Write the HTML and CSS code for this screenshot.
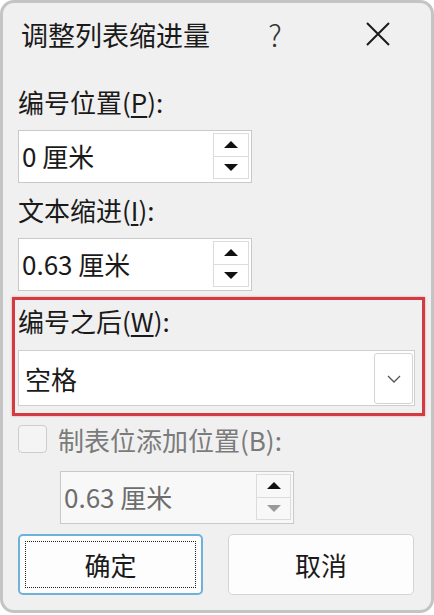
FILE: index.html
```html
<!DOCTYPE html>
<html lang="zh-CN">
<head>
    <meta charset="UTF-8">
    <meta name="viewport" content="width=device-width, initial-scale=1.0">
    <title>调整列表缩进量</title>
    <link rel="stylesheet" href="styles.css">
</head>
<body>

<div class="dialog">
    <div class="titlebar">
        <span class="title">调整列表缩进量</span>
        <span class="help">?</span>
        <span class="close">
            <svg width="24" height="24" viewBox="0 0 24 24"><path d="M1 1 L23 23 M23 1 L1 23" stroke="#1a1a1a" stroke-width="2" fill="none"/></svg>
        </span>
    </div>

    <div class="content">
        <div class="label">编号位置(<u>P</u>):</div>
        <div class="spin-field">
            <span class="value">0 厘米</span>
            <div class="spinner">
                <span class="spin-btn"><i class="arrow-up"></i></span>
                <span class="spin-btn"><i class="arrow-down"></i></span>
            </div>
        </div>

        <div class="label label-gap">文本缩进(<u>I</u>):</div>
        <div class="spin-field">
            <span class="value">0.63 厘米</span>
            <div class="spinner">
                <span class="spin-btn"><i class="arrow-up"></i></span>
                <span class="spin-btn"><i class="arrow-down"></i></span>
            </div>
        </div>

        <div class="highlight">
            <div class="label">编号之后(<u>W</u>):</div>
            <div class="select">
                <span class="value">空格</span>
                <span class="drop-btn">
                    <svg width="14" height="8" viewBox="0 0 14 8"><path d="M1 1 L7 7 L13 1" stroke="#555" stroke-width="1.3" fill="none"/></svg>
                </span>
            </div>
        </div>

        <div class="check-row">
            <span class="checkbox"></span>
            <span class="check-label">制表位添加位置(B):</span>
        </div>
        <div class="spin-field disabled">
            <span class="value">0.63 厘米</span>
            <div class="spinner">
                <span class="spin-btn"><i class="arrow-up"></i></span>
                <span class="spin-btn"><i class="arrow-down"></i></span>
            </div>
        </div>

        <div class="buttons">
            <button class="btn btn-default"><span class="focus-ring">确定</span></button>
            <button class="btn">取消</button>
        </div>
    </div>
</div>

</body>
</html>
```

FILE: styles.css
```css
body {
    margin: 0;
    padding: 0;
    background: #ffffff;
    font-family: "Noto Sans CJK SC", "Noto Sans", sans-serif;
    color: #1a1a1a;
}

.dialog {
    box-sizing: border-box;
    width: 434px;
    height: 613px;
    border: 3px solid #c4c4c4;
    border-radius: 14px;
    background: #f0f0f0;
    overflow: hidden;
}

.titlebar {
    display: flex;
    align-items: center;
    height: 62px;
    padding-left: 18px;
    font-size: 27px;
}

.title {
    flex: 1;
}

.help {
    width: 40px;
    margin-right: 53px;
    text-align: center;
    font-size: 30px;
    font-weight: 300;
    color: #333;
}

.close {
    display: flex;
    justify-content: center;
    width: 60px;
    margin-right: 23px;
}

.content {
    padding-left: 15px;
    font-size: 26px;
}

.label {
    height: 30px;
    line-height: 30px;
    margin-top: 22px;
}

.label-gap {
    margin-top: 12px;
}

.label u {
    text-underline-offset: 3px;
}

.spin-field {
    box-sizing: border-box;
    display: flex;
    align-items: center;
    width: 234px;
    height: 53px;
    margin-top: 13px;
    border: 1px solid #c9c9c9;
    background: #ffffff;
    padding: 2px 2px 3px 3px;
}

.spin-field .value {
    flex: 1;
    line-height: 30px;
}

.spinner {
    box-sizing: border-box;
    display: flex;
    flex-direction: column;
    width: 36px;
    height: 100%;
    border: 1px solid #dcdcdc;
}

.spin-btn {
    flex: 1;
    display: flex;
    align-items: center;
    justify-content: center;
}

.spin-btn + .spin-btn {
    border-top: 1px solid #dcdcdc;
}

.arrow-up {
    width: 0;
    height: 0;
    border-left: 7px solid transparent;
    border-right: 7px solid transparent;
    border-bottom: 7px solid #111;
}

.arrow-down {
    width: 0;
    height: 0;
    border-left: 7px solid transparent;
    border-right: 7px solid transparent;
    border-top: 7px solid #111;
}

.highlight {
    box-sizing: border-box;
    width: 413px;
    margin-left: -6px;
    margin-top: 6px;
    padding: 3px 7px 7px 3px;
    border: 3px solid #d33a41;
    box-shadow: 0 0 2px rgba(220, 60, 70, 0.5);
}

.highlight .label {
    margin-top: 3px;
}

.select {
    box-sizing: border-box;
    display: flex;
    align-items: center;
    height: 56px;
    margin-top: 14px;
    border: 1px solid #cfcfcf;
    background: #ffffff;
    padding: 2px 1px 1px 6px;
}

.select .value {
    flex: 1;
}

.drop-btn {
    box-sizing: border-box;
    display: flex;
    align-items: center;
    justify-content: center;
    width: 39px;
    height: 100%;
    border: 1px solid #d4d4d4;
    border-radius: 3px;
}

.check-row {
    display: flex;
    align-items: center;
    margin-top: 9px;
    height: 28px;
}

.checkbox {
    box-sizing: border-box;
    width: 29px;
    height: 28px;
    border: 1px solid #cdcdcd;
    border-radius: 4px;
    background: #f4f4f4;
}

.check-label {
    margin-left: 11px;
    color: #7b7b7b;
}

.spin-field.disabled {
    margin-left: 42px;
    margin-top: 18px;
    background: #f8f8f8;
    color: #6d6d6d;
}

.disabled .spinner {
    width: 35px;
}

.disabled .spin-btn + .spin-btn .arrow-down {
    border-top-color: #9a9a9a;
}

.buttons {
    display: flex;
    gap: 25px;
    margin-top: 10px;
}

.btn {
    box-sizing: border-box;
    width: 186px;
    height: 61px;
    border: 1px solid #d4d4d4;
    border-radius: 5px;
    background: #fdfdfd;
    font-family: inherit;
    font-size: 26px;
    color: #1a1a1a;
    padding: 0;
}

.btn-default {
    width: 185px;
    border: 2px solid #6eb2da;
    padding: 5px;
}

.focus-ring {
    box-sizing: border-box;
    display: flex;
    align-items: center;
    justify-content: center;
    height: 100%;
    border: 1px dotted #222;
}
```
